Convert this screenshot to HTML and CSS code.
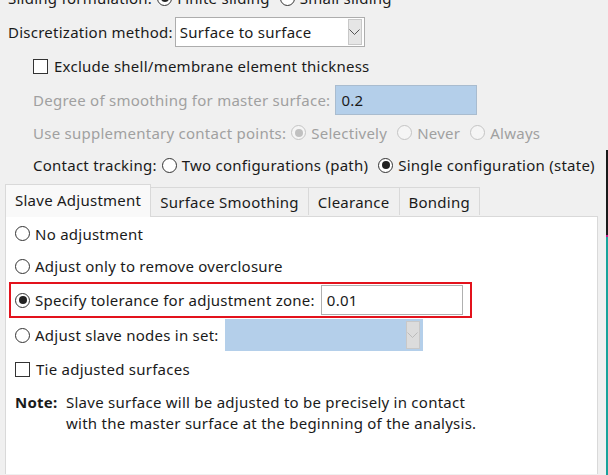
FILE: index.html
```html
<!DOCTYPE html>
<html>
<head>
<meta charset="utf-8">
<link rel="stylesheet" href="styles.css">
</head>
<body>
<div class="dialog">
  <div class="row r1">
    <span class="lbl">Sliding formulation:</span>
    <span class="radio on"></span><span class="opt">Finite sliding</span>
    <span class="radio"></span><span class="opt">Small sliding</span>
  </div>
  <div class="row r2">
    <span class="lbl">Discretization method:</span>
    <div class="combo">
      <span class="combo-text">Surface to surface</span>
      <span class="combo-btn"><svg width="11" height="7" viewBox="0 0 11 7"><path d="M0.5 0.5 L5.5 5.5 L10.5 0.5" fill="none" stroke="#555" stroke-width="1"/></svg></span>
    </div>
  </div>
  <div class="row ind r3">
    <span class="check"></span><span class="opt">Exclude shell/membrane element thickness</span>
  </div>
  <div class="row ind r4">
    <span class="lbl dis">Degree of smoothing for master surface:</span>
    <div class="field blue">0.2</div>
  </div>
  <div class="row ind r5 dis">
    <span class="lbl">Use supplementary contact points:</span>
    <span class="radio on dim"></span><span class="opt">Selectively</span>
    <span class="radio dim"></span><span class="opt">Never</span>
    <span class="radio dim"></span><span class="opt">Always</span>
  </div>
  <div class="row ind r6">
    <span class="lbl">Contact tracking:</span>
    <span class="radio"></span><span class="opt">Two configurations (path)</span>
    <span class="radio on"></span><span class="opt">Single configuration (state)</span>
  </div>

  <div class="tabs">
    <div class="tab active">Slave Adjustment</div>
    <div class="tab">Surface Smoothing</div>
    <div class="tab">Clearance</div>
    <div class="tab">Bonding</div>
  </div>
  <div class="panel">
    <div class="prow p1"><span class="radio"></span><span class="opt">No adjustment</span></div>
    <div class="prow p2"><span class="radio"></span><span class="opt">Adjust only to remove overclosure</span></div>
    <div class="highlight">
      <div class="prow p3"><span class="radio on"></span><span class="opt">Specify tolerance for adjustment zone:</span><div class="field white">0.01</div></div>
    </div>
    <div class="prow p4"><span class="radio"></span><span class="opt">Adjust slave nodes in set:</span>
      <div class="combo blue-combo"><span class="combo-text"></span><span class="combo-btn gray"><svg width="11" height="7" viewBox="0 0 11 7"><path d="M0.5 0.5 L5.5 5.5 L10.5 0.5" fill="none" stroke="#bbb" stroke-width="1"/></svg></span></div>
    </div>
    <div class="prow p5"><span class="check"></span><span class="opt">Tie adjusted surfaces</span></div>
    <div class="note">
      <span class="note-lbl">Note:</span>
      <span class="note-text">Slave surface will be adjusted to be precisely in contact<br>with the master surface at the beginning of the analysis.</span>
    </div>
  </div>
</div>
<div class="edge"></div>
</body>
</html>
```
FILE: styles.css
```css
html, body {
  margin: 0;
  padding: 0;
  width: 608px;
  height: 475px;
  overflow: hidden;
  background: #f0f0f0;
  font-family: "Noto Sans", "Open Sans", sans-serif;
  font-size: 15px;
  letter-spacing: 0.25px;
  color: #1a1a1a;
}
.dialog {
  position: relative;
}
.row {
  display: flex;
  align-items: center;
  height: 33px;
  padding-left: 8px;
  white-space: nowrap;
}
.r1 { margin-top: -19px; height: 34px; }
.r2 { height: 34px; }
.r3 { height: 34px; }
.r4 { height: 33px; }
.r5 { height: 33px; }
.r6 { height: 32px; }
.ind { padding-left: 33px; }
.lbl { margin-right: 5px; }
.r2 .lbl { margin-right: 2px; }
.dis, .dis .lbl, .dis .opt { color: #a0a0a0; }
.opt { margin-right: 10px; }

.radio {
  box-sizing: border-box;
  width: 15px;
  height: 15px;
  border: 1px solid #333;
  border-radius: 50%;
  background: #fff;
  margin-right: 5px;
  display: inline-flex;
  align-items: center;
  justify-content: center;
  flex: none;
}
.radio.on::after {
  content: "";
  width: 8px;
  height: 8px;
  border-radius: 50%;
  background: #222;
}
.radio.dim { border-color: #c4c4c4; background: #f5f5f5; }
.radio.dim.on::after { background: #c0c0c0; }

.check {
  box-sizing: border-box;
  width: 15px;
  height: 15px;
  border: 1px solid #333;
  background: #fff;
  margin-right: 6px;
  flex: none;
}

.combo {
  box-sizing: border-box;
  display: flex;
  align-items: center;
  width: 190px;
  height: 30px;
  border: 1px solid #adadad;
  background: #fff;
  padding-left: 4px;
}
.combo-text { flex: 1; }
.combo-btn {
  box-sizing: border-box;
  width: 14px;
  height: 26px;
  margin-right: 2px;
  border: 1px solid #c8c8c8;
  background: #e6e6e6;
  display: flex;
  align-items: center;
  justify-content: center;
}
.field {
  box-sizing: border-box;
  height: 30px;
  width: 142px;
  display: flex;
  align-items: center;
  padding-left: 5px;
  color: #1a1a1a;
}
.field.blue {
  background: #b4cfea;
  border: 1px solid #a9bccf;
}
.field.white {
  background: #fff;
  border: 1px solid #b0b0b0;
}

.tabs {
  display: flex;
  align-items: flex-end;
  margin-left: 5px;
  margin-top: 3px;
  height: 32px;
  position: relative;
  z-index: 1;
}
.tab {
  box-sizing: border-box;
  height: 28px;
  border: 1px solid #d9d9d9;
  border-left: none;
  border-bottom: none;
  background: #f0f0f0;
  padding: 0 9px;
  display: flex;
  align-items: center;
  margin-bottom: 1px;
}
.tab.active {
  height: 33px;
  border-left: 1px solid #d9d9d9;
  background: #f9f9f9;
  margin-bottom: -1px;
  padding-bottom: 2px;
}
.panel {
  box-sizing: border-box;
  margin-left: 5px;
  width: 593px;
  height: 258px;
  background: #fff;
  border: 1px solid #d9d9d9;
  border-bottom: none;
  padding-left: 9px;
  padding-top: 0;
}
.prow {
  display: flex;
  align-items: center;
  height: 32px;
  white-space: nowrap;
}
.p1 { height: 33px; }
.highlight {
  box-sizing: border-box;
  border: 2px solid #e3121c;
  width: 463px;
  height: 36px;
  margin-left: -6px;
  padding-left: 4px;
  display: flex;
  align-items: center;
}
.p3 { height: 30px; }
.p3 .opt { margin-right: 6px; }
.p4 { height: 34px; }
.p4 .opt { margin-right: 6px; }
.blue-combo {
  background: #b4cfea;
  border-color: #b4cfea;
  width: 198px;
  height: 32px;
}
.combo-btn.gray { background: #dcdcdc; border-color: #c8c8c8; height: 28px; }
.p5 { height: 34px; }
.note {
  display: flex;
  margin-top: 6px;
}
.note-text { line-height: 21px; }
.note-lbl { font-weight: bold; width: 51px; flex: none; line-height: 21px; }
.edge {
  position: absolute;
  right: 0;
  top: 150px;
  width: 2px;
  height: 325px;
  background: linear-gradient(#1a1a1a 0, #1a1a1a 85px, #c0168c 85px, #c0168c 87px, #17a39b 87px);
}
```
